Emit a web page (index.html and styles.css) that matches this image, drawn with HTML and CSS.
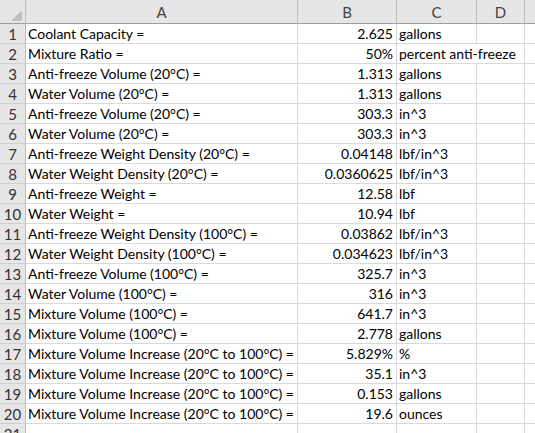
FILE: index.html
```html
<!DOCTYPE html>
<html lang="en">

<head>
  <meta charset="UTF-8">
  <meta name="viewport" content="width=device-width, initial-scale=1.0">
  <title>Coolant Expansion</title>
  <link rel="stylesheet" href="styles.css">
</head>

<body>
  <div class="sheet">
    <!-- column headers -->
    <div class="corner"><span class="select-all"></span></div>
    <div class="col-head">A</div>
    <div class="col-head">B</div>
    <div class="col-head">C</div>
    <div class="col-head">D</div>
    <div class="col-head last"></div>

    <div class="row-head">1</div>
    <div class="cell">Coolant Capacity =</div>
    <div class="cell num">2.625</div>
    <div class="cell">gallons</div>
    <div class="cell"></div>
    <div class="cell last"></div>

    <div class="row-head">2</div>
    <div class="cell">Mixture Ratio =</div>
    <div class="cell num">50%</div>
    <div class="cell spill">percent anti-freeze</div>
    <div class="cell"></div>
    <div class="cell last"></div>

    <div class="row-head">3</div>
    <div class="cell">Anti-freeze Volume (20°C) =</div>
    <div class="cell num">1.313</div>
    <div class="cell">gallons</div>
    <div class="cell"></div>
    <div class="cell last"></div>

    <div class="row-head">4</div>
    <div class="cell">Water Volume (20°C) =</div>
    <div class="cell num">1.313</div>
    <div class="cell">gallons</div>
    <div class="cell"></div>
    <div class="cell last"></div>

    <div class="row-head">5</div>
    <div class="cell">Anti-freeze Volume (20°C) =</div>
    <div class="cell num">303.3</div>
    <div class="cell">in^3</div>
    <div class="cell"></div>
    <div class="cell last"></div>

    <div class="row-head">6</div>
    <div class="cell">Water Volume (20°C) =</div>
    <div class="cell num">303.3</div>
    <div class="cell">in^3</div>
    <div class="cell"></div>
    <div class="cell last"></div>

    <div class="row-head">7</div>
    <div class="cell">Anti-freeze Weight Density (20°C) =</div>
    <div class="cell num">0.04148</div>
    <div class="cell">lbf/in^3</div>
    <div class="cell"></div>
    <div class="cell last"></div>

    <div class="row-head">8</div>
    <div class="cell">Water Weight Density (20°C) =</div>
    <div class="cell num">0.0360625</div>
    <div class="cell">lbf/in^3</div>
    <div class="cell"></div>
    <div class="cell last"></div>

    <div class="row-head">9</div>
    <div class="cell">Anti-freeze Weight =</div>
    <div class="cell num">12.58</div>
    <div class="cell">lbf</div>
    <div class="cell"></div>
    <div class="cell last"></div>

    <div class="row-head">10</div>
    <div class="cell">Water Weight =</div>
    <div class="cell num">10.94</div>
    <div class="cell">lbf</div>
    <div class="cell"></div>
    <div class="cell last"></div>

    <div class="row-head">11</div>
    <div class="cell">Anti-freeze Weight Density (100°C) =</div>
    <div class="cell num">0.03862</div>
    <div class="cell">lbf/in^3</div>
    <div class="cell"></div>
    <div class="cell last"></div>

    <div class="row-head">12</div>
    <div class="cell">Water Weight Density (100°C) =</div>
    <div class="cell num">0.034623</div>
    <div class="cell">lbf/in^3</div>
    <div class="cell"></div>
    <div class="cell last"></div>

    <div class="row-head">13</div>
    <div class="cell">Anti-freeze Volume (100°C) =</div>
    <div class="cell num">325.7</div>
    <div class="cell">in^3</div>
    <div class="cell"></div>
    <div class="cell last"></div>

    <div class="row-head">14</div>
    <div class="cell">Water Volume (100°C) =</div>
    <div class="cell num">316</div>
    <div class="cell">in^3</div>
    <div class="cell"></div>
    <div class="cell last"></div>

    <div class="row-head">15</div>
    <div class="cell">Mixture Volume (100°C) =</div>
    <div class="cell num">641.7</div>
    <div class="cell">in^3</div>
    <div class="cell"></div>
    <div class="cell last"></div>

    <div class="row-head">16</div>
    <div class="cell">Mixture Volume (100°C) =</div>
    <div class="cell num">2.778</div>
    <div class="cell">gallons</div>
    <div class="cell"></div>
    <div class="cell last"></div>

    <div class="row-head">17</div>
    <div class="cell">Mixture Volume Increase (20°C to 100°C) =</div>
    <div class="cell num">5.829%</div>
    <div class="cell">%</div>
    <div class="cell"></div>
    <div class="cell last"></div>

    <div class="row-head">18</div>
    <div class="cell">Mixture Volume Increase (20°C to 100°C) =</div>
    <div class="cell num">35.1</div>
    <div class="cell">in^3</div>
    <div class="cell"></div>
    <div class="cell last"></div>

    <div class="row-head">19</div>
    <div class="cell">Mixture Volume Increase (20°C to 100°C) =</div>
    <div class="cell num">0.153</div>
    <div class="cell">gallons</div>
    <div class="cell"></div>
    <div class="cell last"></div>

    <div class="row-head">20</div>
    <div class="cell">Mixture Volume Increase (20°C to 100°C) =</div>
    <div class="cell num">19.6</div>
    <div class="cell">ounces</div>
    <div class="cell"></div>
    <div class="cell last"></div>

    <div class="row-head">21</div>
    <div class="cell"></div>
    <div class="cell"></div>
    <div class="cell"></div>
    <div class="cell"></div>
    <div class="cell last"></div>
  </div>
</body>

</html>
```

FILE: styles.css
```css
body {
  margin: 0;
  background: #fff;
  font-family: Lato, "Liberation Sans", sans-serif;
  font-size: 14px;
  color: #000;
  overflow: hidden;
}

/* the grid of cells */
.sheet {
  display: grid;
  grid-template-columns: 26px 272px 99px 80px 48px 1fr;
  grid-auto-rows: 20px;
  grid-template-rows: 24px;
  width: 535px;
}

.corner,
.col-head,
.row-head,
.cell {
  box-sizing: border-box;
  white-space: nowrap;
}

/* header strip */
.corner {
  position: relative;
  background: #e6e6e6;
  border-right: 1px solid #bdbdbd;
  border-bottom: 1px solid #9e9e9e;
}

.select-all {
  position: absolute;
  right: 3px;
  bottom: 2px;
  width: 0;
  height: 0;
  border-left: 11px solid transparent;
  border-bottom: 11px solid #c0c0c0;
}

.col-head {
  background: #e6e6e6;
  color: #444;
  font-size: 15px;
  text-align: center;
  line-height: 24px;
  border-right: 1px solid #bdbdbd;
  border-bottom: 1px solid #9e9e9e;
}

.row-head {
  background: #e6e6e6;
  color: #333;
  font-size: 15px;
  text-align: center;
  line-height: 20px;
  border-right: 1px solid #bdbdbd;
  border-bottom: 1px solid #d0d0d0;
}

.cell {
  padding: 0 3px 0 2px;
  line-height: 20px;
  font-size: 14px;
  border-right: 1px solid #d9d9d9;
  border-bottom: 1px solid #d9d9d9;
  overflow: visible;
}

.cell.num {
  text-align: right;
}

/* text running into the next empty cell hides the gridline */
.cell.spill {
  border-right-color: transparent;
}

.last {
  border-right: none;
}
```
